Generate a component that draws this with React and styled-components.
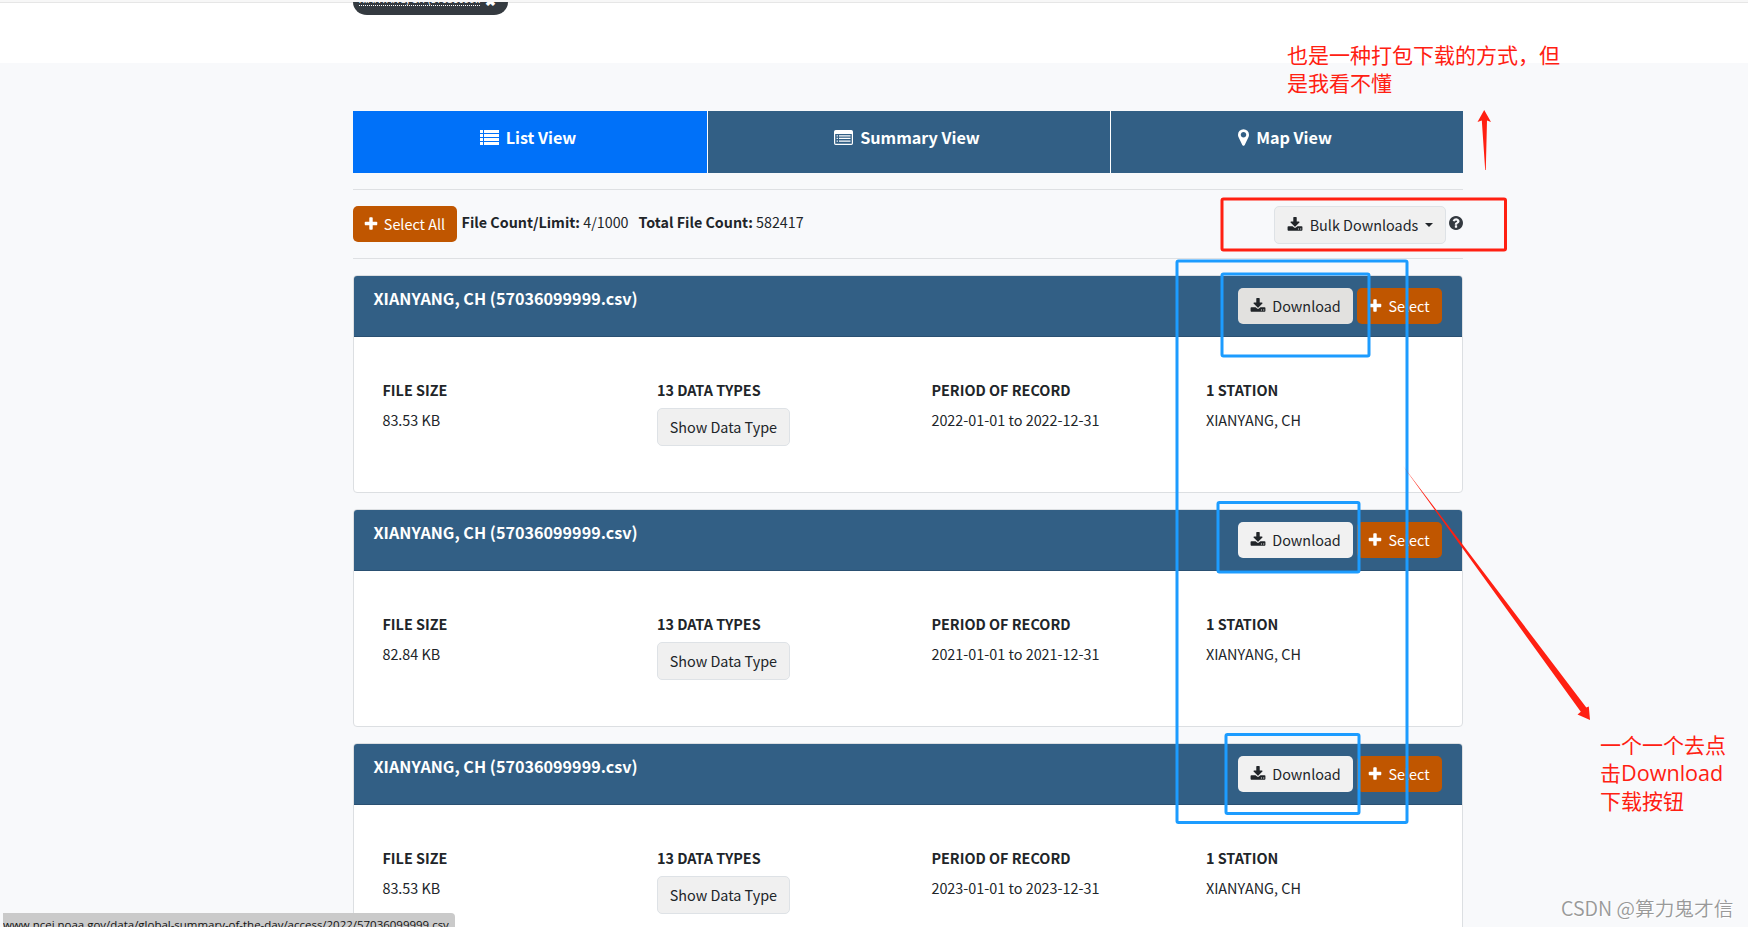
import React from 'react';
import styled, { createGlobalStyle } from 'styled-components'

const Global = createGlobalStyle`
    html, body{
        margin: 0;
        padding: 0;
        height: 100%;
        overflow: hidden;
    }
    *{
        box-sizing: border-box;
    }
`

const files = [
    { id: 1, size: '83.53 KB', period: '2022-01-01 to 2022-12-31', hover: true },
    { id: 2, size: '82.84 KB', period: '2021-01-01 to 2021-12-31' },
    { id: 3, size: '83.53 KB', period: '2023-01-01 to 2023-12-31' },
]

const PlusIcon = () => (
    <Icon $w={16} viewBox="0 0 1792 1792">
        <path d="M1600 736v192q0 40-28 68t-68 28h-416v416q0 40-28 68t-68 28h-192q-40 0-68-28t-28-68v-416h-416q-40 0-68-28t-28-68v-192q0-40 28-68t68-28h416v-416q0-40 28-68t68-28h192q40 0 68 28t28 68v416h416q40 0 68 28t28 68z" />
    </Icon>
)

const DownloadIcon = () => (
    <Icon $w={16} viewBox="0 0 1792 1792">
        <path d="M1344 1344q0-26-19-45t-45-19-45 19-19 45 19 45 45 19 45-19 19-45zm256 0q0-26-19-45t-45-19-45 19-19 45 19 45 45 19 45-19 19-45zm128-224v320q0 40-28 68t-68 28h-1472q-40 0-68-28t-28-68v-320q0-40 28-68t68-28h465l135 136q58 56 136 56t136-56l136-136h464q40 0 68 28t28 68zm-325-569q17 41-14 70l-448 448q-18 19-45 19t-45-19l-448-448q-31-29-14-70 17-39 59-39h256v-448q0-26 19-45t45-19h256q26 0 45 19t19 45v448h256q42 0 59 39z" />
    </Icon>
)

const ListIcon = () => (
    <Icon $w={19} $h={15} viewBox="0 0 19 15">
        <path d="M0 0h3v3H0zM4 0h15v3H4zM0 4h3v3H0zM4 4h15v3H4zM0 8h3v3H0zM4 8h15v3H4zM0 12h3v3H0zM4 12h15v3H4z" />
    </Icon>
)

const ListAltIcon = () => (
    <Icon $w={19} $h={15} viewBox="0 0 19 15">
        <path fillRule="evenodd" d="M1.7 0h15.6Q19 0 19 1.7v11.6Q19 15 17.3 15H1.7Q0 15 0 13.3V1.7Q0 0 1.7 0zM1.2 4v9.2q0 .6.6.6h15.4q.6 0 .6-.6V4z" />
        <path d="M2.6 5.2h1.3v1.3H2.6zM5 5.2h11.5v1.3H5zM2.6 7.8h1.3v1.3H2.6zM5 7.8h11.5v1.3H5zM2.6 10.4h1.3v1.3H2.6zM5 10.4h11.5v1.3H5z" />
    </Icon>
)

const MarkerIcon = () => (
    <Icon $w={11} $h={17} viewBox="384 128 1024 1536">
        <path d="M1152 640q0-106-75-181t-181-75-181 75-75 181 75 181 181 75 181-75 75-181zm256 0q0 109-33 179l-364 774q-16 33-47.5 52t-67.5 19-67.5-19-46.5-52l-365-774q-33-70-33-179 0-212 150-362t362-150 362 150 150 362z" />
    </Icon>
)

const HelpIcon = () => (
    <Icon $w={14} viewBox="128 128 1536 1536">
        <path d="M1024 1376v-192q0-14-9-23t-23-9h-192q-14 0-23 9t-9 23v192q0 14 9 23t23 9h192q14 0 23-9t9-23zm256-672q0-88-55.5-163t-138.5-116-170-41q-243 0-371 213-15 24 8 42l132 100q7 6 19 6 16 0 25-12 53-68 86-92 34-24 86-24 48 0 85.5 26t37.5 59q0 38-20 61t-68 45q-63 28-115.5 86.5t-52.5 125.5v36q0 14 9 23t23 9h192q14 0 23-9t9-23q0-19 21.5-49.5t54.5-49.5q32-18 49-28.5t46-35 44.5-48 28-60.5 12.5-81zm384 192q0 209-103 385.5t-279.5 279.5-385.5 103-385.5-103-279.5-279.5-103-385.5 103-385.5 279.5-279.5 385.5-103 385.5 103 279.5 279.5 103 385.5z" />
    </Icon>
)

const FileCard = ({ file }) => (
    <Card>
        <CardHead>
            <h2>XIANYANG, CH (57036099999.csv)</h2>
            <div className="actions">
                <Button $w={115} $bg={file.hover ? '#e2e1df' : '#f1f1f1'}><DownloadIcon /><span>Download</span></Button>
                <Button $w={85} $orange><PlusIcon /><span>Select</span></Button>
            </div>
        </CardHead>
        <CardBody>
            <Field><dt>FILE SIZE</dt><dd>{file.size}</dd></Field>
            <Field>
                <dt>13 DATA TYPES</dt>
                <Button $w={133} $outline>Show Data Type</Button>
            </Field>
            <Field><dt>PERIOD OF RECORD</dt><dd>{file.period}</dd></Field>
            <Field><dt>1 STATION</dt><dd>XIANYANG, CH</dd></Field>
        </CardBody>
    </Card>
)

const Marks = () => (
    <MarkLayer viewBox="0 0 1748 927">
        <g fill="none" strokeWidth="3">
            <rect x="1222" y="199" width="283.5" height="51" rx="1.5" stroke="#ff2012" />
            <g stroke="#1c9cff">
                <rect x="1177" y="261" width="230" height="561.5" rx="1.5" />
                <rect x="1222" y="274" width="147" height="82" rx="1.5" />
                <rect x="1218" y="502.5" width="141" height="69.5" rx="1.5" />
                <rect x="1226" y="734.5" width="133" height="79" rx="1.5" />
            </g>
        </g>
        <g fill="#ff2012">
            <path d="M1484.2 110L1491 122L1487 120.5L1485.8 170L1485.2 170L1481.8 120.5L1477.5 122Z" />
            <path d="M1403 466L1586.3 707.5L1588.8 706.5L1590 720L1577.5 714.5L1580.8 711.7Z" />
        </g>
    </MarkLayer>
)

export default function App() {
    return (
        <Page>
            <Global />
            <TopBar>
                <Pill><span>XIANYANG, CH (57036099..</span><b>✖</b></Pill>
            </TopBar>
            <Content>
                <Tabs>
                    <Tab $active><ListIcon />List View</Tab>
                    <Tab><ListAltIcon />Summary View</Tab>
                    <Tab><MarkerIcon />Map View</Tab>
                </Tabs>
                <Toolbar>
                    <Button $w={104} $orange><PlusIcon /><span>Select All</span></Button>
                    <Counts>
                        <span><b>File Count/Limit:</b> 4/1000</span>
                        <span><b>Total File Count:</b> 582417</span>
                    </Counts>
                    <Button $w={172} $outline $gap={7}><DownloadIcon /><span>Bulk Downloads</span><Caret /></Button>
                    <Help><HelpIcon /></Help>
                </Toolbar>
                {files.map((item) => <FileCard key={item.id} file={item} />)}
            </Content>
            <Marks />
            <Note $x={1287} $y={40}>也是一种打包下载的方式，但<br />是我看不懂</Note>
            <Note $x={1600} $y={730}>一个一个去点<br />击<span>Download</span><br />下载按钮</Note>
            <StatusBar>www.ncei.noaa.gov/data/global-summary-of-the-day/access/2022/57036099999.csv</StatusBar>
            <Watermark>CSDN @算力鬼才信</Watermark>
        </Page>
    );
}

const Page = styled.div`
    position: relative;
    width: 100%;
    height: 927px;
    overflow: hidden;
    background: #f8f9fb;
    color: #212529;
    font-family: "Noto Sans CJK SC", "Open Sans", sans-serif;
    font-size: 14.4px;
`
const TopBar = styled.div`
    height: 63px;
    padding-left: 353px;
    background: #fff;
    border-top: 2px solid #f7f7f7;
    box-shadow: inset 0 1px 0 #e6e6e6;
`
const Pill = styled.div`
    display: flex;
    align-items: flex-end;
    width: 155px;
    height: 13px;
    padding: 0 0 9px 6px;
    overflow: hidden;
    border-radius: 0 0 14px 14px / 0 0 13px 13px;
    background: #343a40;
    color: #fff;
    font-size: 10px;
    line-height: 12px;
    white-space: nowrap;
    span{
        width: 121px;
        border-bottom: 1px dotted #fff;
    }
    b{
        margin-left: 5px;
        font-size: 13px;
        line-height: 10px;
    }
`
const Content = styled.div`
    width: 1110px;
    margin-left: 353px;
    padding-top: 48px;
`
const Tabs = styled.div`
    display: grid;
    grid-template-columns: 354px 402px 352px;
    gap: 1px;
    height: 62px;
    background: #fff;
`
const Tab = styled.div`
    display: flex;
    align-items: center;
    justify-content: center;
    gap: 7px;
    padding: 0 4px 10px 0;
    background: ${(p) => (p.$active ? '#0071f9' : '#325f85')};
    color: #fff;
    font-size: 16.2px;
    font-weight: 700;
`
const Icon = styled.svg`
    flex: none;
    width: ${(p) => p.$w}px;
    height: ${(p) => p.$h || p.$w}px;
    fill: currentColor;
`
const Toolbar = styled.div`
    display: flex;
    align-items: flex-start;
    height: 70px;
    margin: 16px 0;
    padding-top: 16px;
    border-top: 1px solid #dee0e3;
    border-bottom: 1px solid #dee0e3;
`
const Button = styled.button`
    display: flex;
    align-items: center;
    justify-content: center;
    gap: ${(p) => p.$gap || (p.$orange ? 5 : 6)}px;
    width: ${(p) => p.$w}px;
    height: ${(p) => (p.$outline ? 38 : 36)}px;
    padding: 0 ${(p) => (p.$orange ? 2 : 0)}px 0 0;
    border: ${(p) => (p.$outline ? '1px solid #dee2e6' : 'none')};
    border-radius: 5px;
    background: ${(p) => (p.$orange ? '#c05600' : p.$bg || '#f0f0f0')};
    color: ${(p) => (p.$orange ? '#fff' : '#212529')};
    font-family: inherit;
    font-size: 14.4px;
    line-height: 20px;
    white-space: nowrap;
`
const Counts = styled.div`
    display: flex;
    flex: 1;
    gap: 10px;
    padding: 4px 0 0 4.6px;
    font-size: 14.3px;
    line-height: 24px;
`
const Caret = styled.i`
    border: 4px solid transparent;
    border-top-color: currentColor;
    border-bottom: 0;
`
const Help = styled.span`
    display: flex;
    padding: 10px 0 0 3px;
    color: #343a40;
`
const Card = styled.div`
    height: 218px;
    margin-bottom: 16px;
    border: 1px solid #dcdfe2;
    border-radius: 4px;
    overflow: hidden;
    background: #fff;
`
const CardHead = styled.div`
    display: flex;
    justify-content: space-between;
    height: 61px;
    padding: 12px 20px 0 19.5px;
    border-bottom: 1px solid #2a5072;
    background: #325f85;
    h2{
        margin: -2px 0 0;
        color: #fff;
        font-size: 16.15px;
        font-weight: 700;
        line-height: 24px;
    }
    .actions{
        display: flex;
        gap: 4px;
    }
`
const CardBody = styled.div`
    display: grid;
    grid-template-columns: repeat(4, 274.5px);
    padding: 41px 0 0 28.4px;
`
const Field = styled.dl`
    margin: 0;
    dt{
        height: 30px;
        font-weight: 700;
        line-height: 24px;
    }
    dd{
        margin: 0;
        line-height: 24px;
    }
`
const MarkLayer = styled.svg`
    position: absolute;
    top: 0;
    left: 0;
    width: 1748px;
    height: 927px;
`
const Note = styled.div`
    position: absolute;
    left: ${(p) => p.$x}px;
    top: ${(p) => p.$y}px;
    color: #ff2012;
    font-size: 21px;
    line-height: 28px;
    white-space: nowrap;
    span{
        font-family: "Open Sans", "Noto Sans", sans-serif;
        font-size: 21.6px;
        line-height: 20px;
    }
`
const StatusBar = styled.div`
    position: absolute;
    left: 3px;
    bottom: 0;
    width: 452px;
    height: 14px;
    overflow: hidden;
    border-top-right-radius: 4px;
    background: #cacaca;
    color: #111;
    font-family: "Open Sans", sans-serif;
    font-size: 11.48px;
    line-height: 23px;
    white-space: nowrap;
`
const Watermark = styled.div`
    position: absolute;
    left: 1561px;
    top: 894px;
    color: #999;
    font-size: 19.7px;
    font-weight: 350;
    line-height: 28px;
    text-shadow: 1px 1px 0 #fff;
    white-space: nowrap;
`
